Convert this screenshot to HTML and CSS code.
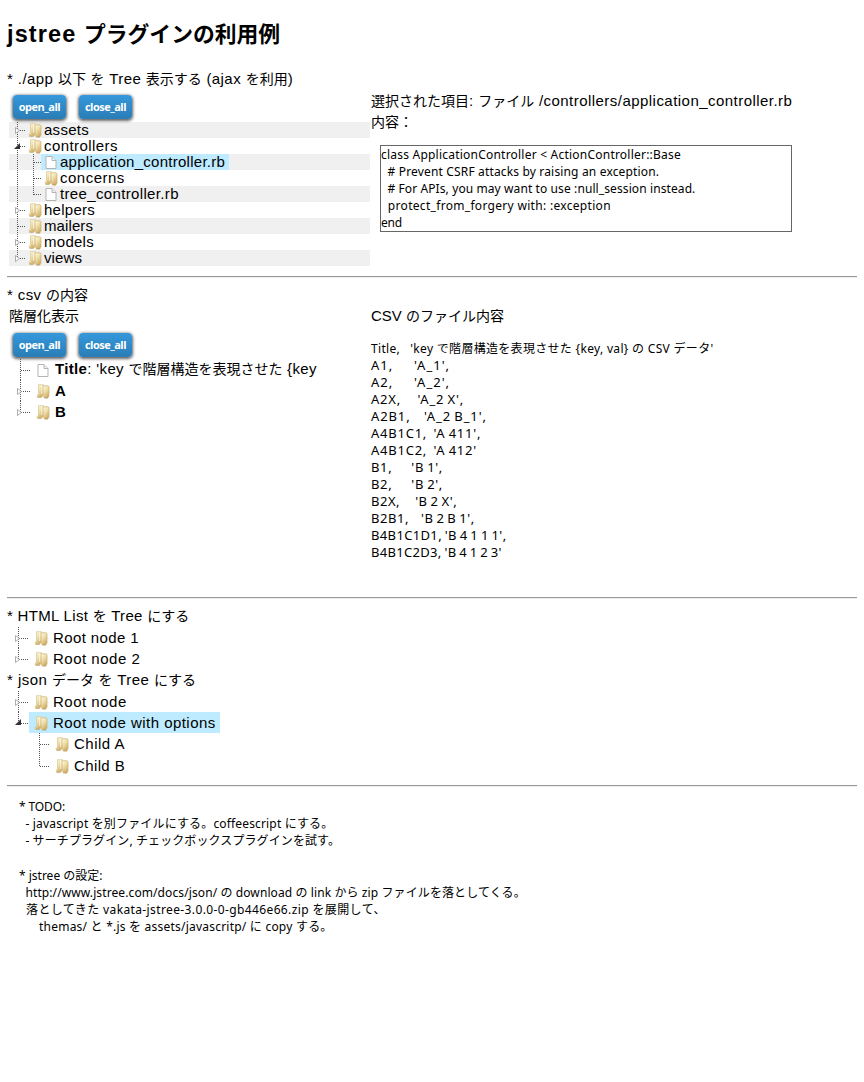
FILE: index.html
```html
<!DOCTYPE html>
<html lang="ja">
<head>
<meta charset="utf-8">
<title>jstree プラグインの利用例</title>
<link rel="stylesheet" href="styles.css">
</head>
<body>
<svg class="defs" aria-hidden="true">
  <defs>
    <linearGradient id="gold" x1="0" y1="0" x2=".6" y2="1"><stop offset="0" stop-color="#fffbe6"/><stop offset=".5" stop-color="#efdfaa"/><stop offset="1" stop-color="#cfae68"/></linearGradient>
    <symbol id="folder" viewBox="0 0 13 15"><path d="M2 .7h5v9.8l-1.5 2.5H.8v-2L2 10z" fill="url(#gold)" stroke="#dccb9b" stroke-width=".8"/><path d="M6.3 1.8h5.2l1 .8v9.3l-1 1.8H7.8l-1-1.8z" fill="url(#gold)" stroke="#d0b77c" stroke-width=".8"/><path d="M5.3 1.2v9" stroke="#fffdf0" stroke-width=".9"/><path d="M1 13.2h4M7.8 13.9h3.8" stroke="#b8924c" stroke-width=".8"/></symbol>
    <symbol id="file" viewBox="0 0 13 15"><path d="M1.5 1.5h6l4 4v8h-10z" fill="#fff" stroke="#b4b4b4"/><path d="M7.5 1.5v4h4" fill="#eee" stroke="#b4b4b4"/></symbol>
    <symbol id="guide"><path d="M8.5 0v22" class="dots"/></symbol>
    <symbol id="mid"><path d="M8.5 0v22M9 8.5h7" class="dots"/></symbol>
    <symbol id="end"><path d="M8.5 0v9M9 8.5h7" class="dots"/></symbol>
    <symbol id="midL"><path d="M9.5 0v22M10 11.5h10" class="dots"/></symbol>
    <symbol id="endL"><path d="M9.5 0v12M10 11.5h10" class="dots"/></symbol>
    <symbol id="closed"><path d="M.5 .5v6l4-3z" fill="#fff" stroke="#999" stroke-width=".8"/></symbol>
    <symbol id="opened"><path d="M6 0v6h-6z" fill="#333"/></symbol>
  </defs>
</svg>
<h1><span class="latin">jstree </span>プラグインの利用例</h1>
<p class="line ls-43">* ./app <i>以下</i> <i>を</i> Tree <i>表示する</i> (ajax <i>を利用</i>)</p>
<section class="columns files">
  <div>
    <div class="toolbar"><button>open_all</button><button>close_all</button></div>
    <div class="tree small">
      <div class="row"><svg class="toggle"><use href="#mid"/><use href="#closed" x="6" y="5"/></svg><a><svg class="icon"><use href="#folder"/></svg><span class="ls-27">assets</span></a></div>
      <div class="row"><svg class="toggle"><use href="#mid"/><use href="#opened" x="5" y="5"/></svg><a><svg class="icon"><use href="#folder"/></svg><span class="ls-43">controllers</span></a></div>
      <div class="row"><svg class="toggle"><use href="#guide"/></svg><svg class="toggle"><use href="#mid"/></svg><a class="selected"><svg class="icon"><use href="#file"/></svg><span class="ls-27">application_controller.rb</span></a></div>
      <div class="row"><svg class="toggle"><use href="#guide"/></svg><svg class="toggle"><use href="#mid"/></svg><a><svg class="icon"><use href="#folder"/></svg><span class="ls-50">concerns</span></a></div>
      <div class="row"><svg class="toggle"><use href="#guide"/></svg><svg class="toggle"><use href="#end"/></svg><a><svg class="icon"><use href="#file"/></svg><span class="ls-34">tree_controller.rb</span></a></div>
      <div class="row"><svg class="toggle"><use href="#mid"/><use href="#closed" x="6" y="5"/></svg><a><svg class="icon"><use href="#folder"/></svg><span class="ls-27">helpers</span></a></div>
      <div class="row"><svg class="toggle"><use href="#mid"/></svg><a><svg class="icon"><use href="#folder"/></svg><span class="ls-10">mailers</span></a></div>
      <div class="row"><svg class="toggle"><use href="#mid"/><use href="#closed" x="6" y="5"/></svg><a><svg class="icon"><use href="#folder"/></svg><span class="ls-27">models</span></a></div>
      <div class="row"><svg class="toggle"><use href="#end"/><use href="#closed" x="6" y="5"/></svg><a><svg class="icon"><use href="#folder"/></svg><span class="ls-10">views</span></a></div>
    </div>
  </div>
  <div>
    <p class="line ls-45"><i>選択された項目</i>: <i>ファイル</i> /controllers/application_controller.rb</p>
    <p class="line"><i>内容：</i></p>
    <pre class="code"><span class="ls-22">class ApplicationController &lt; ActionController::Base</span>
<span class="ls-16">  # Prevent CSRF attacks by raising an exception.</span>
<span class="ls-10">  # For APIs, you may want to use :null_session instead.</span>
<span class="ls-31">  protect_from_forgery with: :exception</span>
<span class="ls-n19">end</span></pre>
  </div>
</section>
<hr>
<p class="line ls-38">* csv <i>の内容</i></p>
<section class="columns csv">
  <div>
    <p class="line"><i>階層化表示</i></p>
    <div class="toolbar"><button>open_all</button><button>close_all</button></div>
    <div class="tree">
      <div class="row"><svg class="toggle"><use href="#midL"/></svg><a><svg class="icon"><use href="#file"/></svg><span class="ls-34"><b>Title</b>: 'key <i>で階層構造を表現させた</i> {key</span></a></div>
      <div class="row"><svg class="toggle"><use href="#midL"/><use href="#closed" x="6" y="8"/></svg><a><svg class="icon"><use href="#folder"/></svg><b>A</b></a></div>
      <div class="row"><svg class="toggle"><use href="#endL"/><use href="#closed" x="6" y="8"/></svg><a><svg class="icon"><use href="#folder"/></svg><b>B</b></a></div>
    </div>
  </div>
  <div>
    <p class="line">CSV <i>のファイル内容</i></p>
    <pre class="data"><span class="ls-31">Title,   'key で階層構造を表現させた {key, val} の CSV データ'</span>
<span class="cell ls-100">A1,      'A_1',</span>
<span class="cell ls-100">A2,      'A_2',</span>
<span class="cell ls-81">A2X,     'A_2 X',</span>
<span class="cell ls-88">A2B1,    'A_2 B_1',</span>
<span class="cell ls-76">A4B1C1,  'A 411',</span>
<span class="cell ls-76">A4B1C2,  'A 412'</span>
<span class="cell ls-67">B1,      'B 1',</span>
<span class="cell ls-67">B2,      'B 2',</span>
<span class="cell ls-52">B2X,     'B 2 X',</span>
<span class="cell ls-52">B2B1,    'B 2 B 1',</span>
<span class="cell ls-34">B4B1C1D1, 'B 4 1 1 1',</span>
<span class="cell ls-31">B4B1C2D3, 'B 4 1 2 3'</span></pre>
  </div>
</section>
<hr>
<p class="line ls-31">* HTML List <i>を</i> Tree <i>にする</i></p>
<div class="tree">
  <div class="row"><svg class="toggle"><use href="#midL"/><use href="#closed" x="6" y="8"/></svg><a><svg class="icon"><use href="#folder"/></svg><span class="ls-38">Root node 1</span></a></div>
  <div class="row"><svg class="toggle"><use href="#endL"/><use href="#closed" x="6" y="8"/></svg><a><svg class="icon"><use href="#folder"/></svg><span class="ls-50">Root node 2</span></a></div>
</div>
<p class="line ls-45">* json <i>データ</i> <i>を</i> Tree <i>にする</i></p>
<div class="tree">
  <div class="row"><svg class="toggle"><use href="#midL"/><use href="#closed" x="6" y="8"/></svg><a><svg class="icon"><use href="#folder"/></svg><span class="ls-50">Root node</span></a></div>
  <div class="row"><svg class="toggle"><use href="#endL"/><use href="#opened" x="6" y="7"/></svg><a class="selected"><svg class="icon"><use href="#folder"/></svg><span class="ls-45">Root node with options</span></a></div>
  <div class="row child"><svg class="toggle"><use href="#midL"/></svg><a><svg class="icon"><use href="#folder"/></svg><span class="ls-50">Child A</span></a></div>
  <div class="row child"><svg class="toggle"><use href="#endL"/></svg><a><svg class="icon"><use href="#folder"/></svg><span class="ls-38">Child B</span></a></div>
</div>
<hr>
<pre class="notes"><span class="ls-n13">* TODO:</span>
<span class="ls-16">  - javascript を別ファイルにする。coffeescript にする。</span>
<span class="ls-10">  - サーチプラグイン, チェックボックスプラグインを試す。</span>

* jstree の設定:
<span class="ls-10">  http://www.jstree.com/docs/json/ の download の link から zip ファイルを落としてくる。</span>
<span class="ls-38">  落としてきた vakata-jstree-3.0.0-0-gb446e66.zip を展開して、</span>
<span class="ls-22">      themas/ と *.js を assets/javascritp/ に copy する。</span></pre>
</body>
</html>
```
FILE: styles.css
```css
body { margin: 0; padding: 19px 7px 0; color: #000; background: #fff; font: 15px/21.33px "Liberation Sans", "Noto Sans CJK JP", sans-serif; }
.defs { position: absolute; width: 0; height: 0; }
i { font-size: 14px; font-style: normal; letter-spacing: 0; }
h1 { margin: 0 0 17.6px; font-size: 21.8px; line-height: 30px; white-space: nowrap; }
h1 .latin { font-size: 23.5px; letter-spacing: 1.1px; }
p { margin: 0; }
.line { height: 21.33px; white-space: nowrap; }
.columns { display: grid; grid-template-columns: 361px 1fr; column-gap: 1px; margin-left: 2px; }
.columns > div { min-width: 0; }
.files { height: 177px; margin-top: 1px; }
.csv { height: 283px; }
.toolbar { display: flex; gap: 13px; height: 32px; padding: 5px 0 0 4px; box-sizing: border-box; }
.csv .toolbar { padding-top: 6px; }
button { width: 53px; height: 24px; padding: 0; border: 0; border-radius: 4px; color: #fff; background: linear-gradient(#3598db, #2a7db6); box-shadow: 0 1px 3px 1px #666; font: bold 11px/24px "Open Sans", sans-serif; letter-spacing: -.5px; }
.row { display: flex; height: 21.33px; }
.row a { display: flex; align-items: center; gap: 5px; padding: 0 4px 0 6px; white-space: nowrap; }
.toggle { flex: none; width: 20px; height: 21.33px; }
.icon { flex: none; width: 14px; height: 15px; margin: 2px 0 0 -1px; }
.dots { fill: none; stroke: #555; stroke-dasharray: 1 1; }
.tree { margin-left: 2px; }
.child { padding-left: 21px; }
.tree .selected { background: #beebff; }
.tree.small { margin-left: 0; }
.small .row { height: 16px; line-height: 16px; }
.small .row:nth-child(odd) { background: #f0f0f0; }
.small .toggle { width: 16px; height: 16px; }
.small a { gap: 2px; padding-left: 4px; }
pre { margin: 0; font: 12px/17px "Noto Sans", "Noto Sans CJK JP", sans-serif; }
.code { box-sizing: border-box; width: 412px; height: 87px; margin: 12px 0 0 9px; border: 1px solid #666; }
.data { margin-top: 13.4px; }
.cell { font-size: 13px; line-height: 1; word-spacing: -.9px; }
hr { height: 1px; margin: 9px 0 6px; border: 0; border-top: 1px solid #999; background: #eee; }
.notes { margin: 11.4px 0 0 12px; line-height: 17.1px; }

/* Tracking steps */
.ls-n19 { letter-spacing: -.19px; }
.ls-n13 { letter-spacing: -.13px; }
.ls-10 { letter-spacing: .1px; }
.ls-16 { letter-spacing: .16px; }
.ls-22 { letter-spacing: .22px; }
.ls-27 { letter-spacing: .27px; }
.ls-31 { letter-spacing: .31px; }
.ls-34 { letter-spacing: .35px; }
.ls-38 { letter-spacing: .38px; }
.ls-43 { letter-spacing: .43px; }
.ls-45 { letter-spacing: .46px; }
.ls-50 { letter-spacing: .5px; }
.ls-52 { letter-spacing: .53px; }
.ls-67 { letter-spacing: .67px; }
.ls-76 { letter-spacing: .76px; }
.ls-81 { letter-spacing: .81px; }
.ls-88 { letter-spacing: .88px; }
.ls-100 { letter-spacing: 1px; }
```
